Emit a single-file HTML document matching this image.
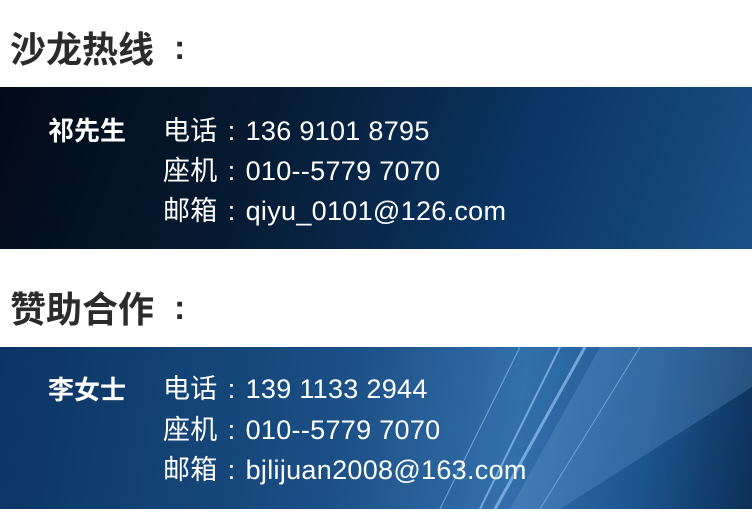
<!DOCTYPE html>
<html><head><meta charset="utf-8"><style>
body{margin:0;width:752px;height:520px;background:#fff;position:relative;overflow:hidden;font-family:"Liberation Sans","Noto Sans CJK SC",sans-serif}
.h{position:absolute;left:10px;font-size:36px;font-weight:bold;color:#2b2b2b;line-height:40px}
.h span{position:absolute;left:164px;top:-2px;font-size:34px}
.p{position:absolute;left:0;width:752px;height:162px;overflow:hidden}
.p1{top:87px;background:linear-gradient(110deg,#020a16 0%,#061b33 35%,#0b3767 70%,#1b5186 100%)}
.p2{top:347px;background:linear-gradient(100deg,#0a3463 0%,#1b4f85 45%,#3370aa 68%,#1c558d 85%,#0c2f58 100%)}
.n{position:absolute;left:48px;font-size:26px;font-weight:bold;color:#fff;line-height:30px}
.l{position:absolute;left:163px;font-size:27px;color:#fff;line-height:30px;white-space:nowrap;letter-spacing:0.3px}
.c{display:inline-block;width:28px;text-align:center}
</style></head><body>
<div class="h" style="top:30px">沙龙热线<span>:</span></div>
<div class="p p1">
<div class="n" style="top:29px">祁先生</div>
<div class="l" style="top:29px">电话<span class="c">:</span>136 9101 8795</div>
<div class="l" style="top:69px">座机<span class="c">:</span>010--5779 7070</div>
<div class="l" style="top:109px">邮箱<span class="c">:</span>qiyu_0101@126.com</div>
</div>
<div class="h" style="top:290px">赞助合作<span>:</span></div>
<div class="p p2">
<svg width="752" height="162" style="position:absolute;left:0;top:0">
<g stroke="#9fd0ff" fill="none" opacity=".6">
<path d="M560 0 L480 162" stroke-width="2"/>
<path d="M585 0 L495 162" stroke-width="3"/>
<path d="M520 0 L440 162" stroke-width="1"/>
<path d="M640 0 L540 162" stroke-width="1"/>
</g>
<path d="M600 0 L752 0 L752 40 L560 162 L510 162 Z" fill="#6ea8dc" opacity=".25"/>
</svg>
<div class="n" style="top:28px">李女士</div>
<div class="l" style="top:27px">电话<span class="c">:</span>139 1133 2944</div>
<div class="l" style="top:68px">座机<span class="c">:</span>010--5779 7070</div>
<div class="l" style="top:108px">邮箱<span class="c">:</span>bjlijuan2008@163.com</div>
</div>
</body></html>
